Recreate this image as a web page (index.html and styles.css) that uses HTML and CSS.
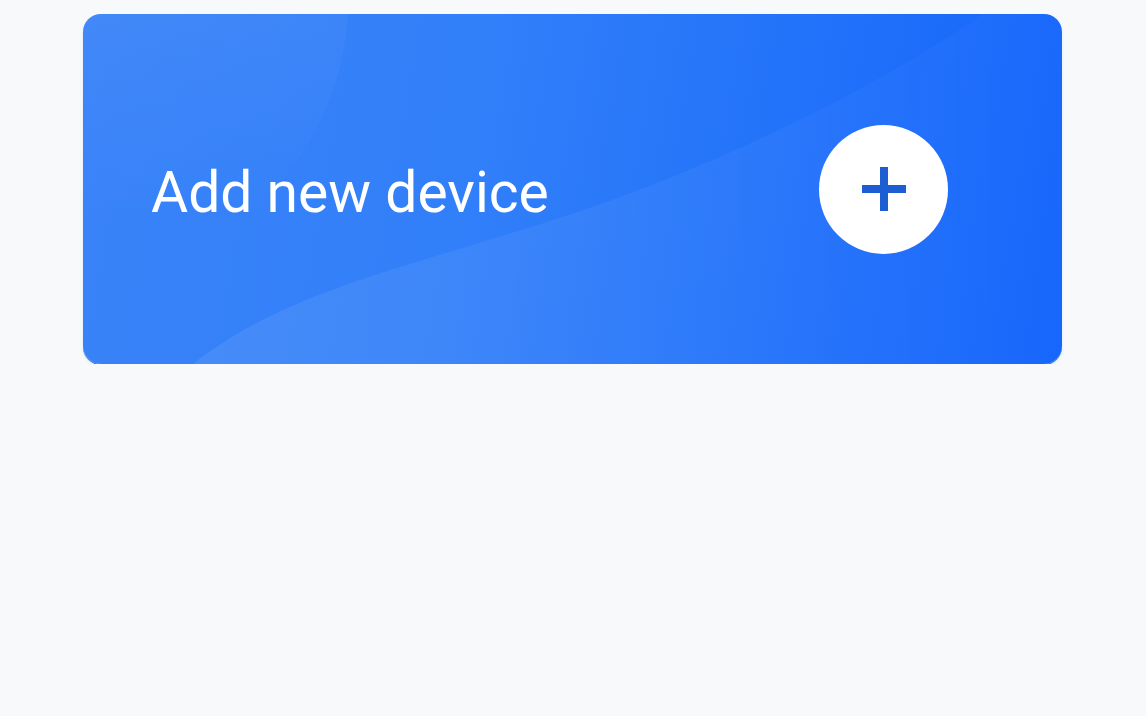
FILE: index.html
```html
<!DOCTYPE html>
<html lang="en">
<head>
<meta charset="utf-8">
<title>Add new device</title>
<link rel="stylesheet" href="styles.css">
</head>
<body>
<main class="page">
  <button class="add-card" type="button">
    <svg class="add-card__deco" viewBox="0 0 979 350" preserveAspectRatio="none" aria-hidden="true">
      <defs>
        <linearGradient id="circleFade" x1="0" y1="0" x2="0" y2="1">
          <stop offset="0" stop-color="#ffffff" stop-opacity="0.09"/>
          <stop offset="0.45" stop-color="#ffffff" stop-opacity="0.05"/>
          <stop offset="0.9" stop-color="#ffffff" stop-opacity="0"/>
        </linearGradient>
        <linearGradient id="waveFade" x1="0" y1="0" x2="1" y2="0">
          <stop offset="0" stop-color="#ffffff" stop-opacity="0.08"/>
          <stop offset="0.5" stop-color="#ffffff" stop-opacity="0.05"/>
          <stop offset="1" stop-color="#ffffff" stop-opacity="0.01"/>
        </linearGradient>
      </defs>
      <circle cx="-13" cy="-14" r="278" fill="url(#circleFade)"/>
      <path d="M110 350 C 200 280, 300 260, 467 207 S 800 70, 900 0 L 979 0 L 979 350 Z" fill="url(#waveFade)"/>
    </svg>
    <span class="add-card__label">Add new device</span>
    <span class="add-card__icon">
      <svg viewBox="0 0 46 46" width="46" height="46" aria-hidden="true">
        <path d="M23 1 V45 M1 23 H45" stroke="#1d5fd3" stroke-width="8" fill="none"/>
      </svg>
    </span>
  </button>
</main>
</body>
</html>
```
FILE: styles.css
```css
* { box-sizing: border-box; }

html, body {
  margin: 0;
  padding: 0;
  background: #f8f9fa;
}

body {
  font-family: Roboto, "Noto Sans", "Liberation Sans", sans-serif;
}

.page {
  padding: 14px 84px 0 83px;
}

.add-card {
  position: relative;
  overflow: hidden;
  width: 100%;
  height: 350px;
  border: none;
  border-radius: 18px;
  padding: 0 114px 0 68px;
  display: flex;
  align-items: center;
  justify-content: space-between;
  background: linear-gradient(100deg, #3a83f8 0%, #317ff9 40%, #2272fa 70%, #1565fb 100%);
  box-shadow: 0 1px 0 #3270dd, 0 2px 3px rgba(120, 200, 240, 0.25);
  cursor: pointer;
  font: inherit;
  text-align: left;
}

.add-card__deco {
  position: absolute;
  left: 0;
  top: 0;
  width: 100%;
  height: 100%;
  pointer-events: none;
}

.add-card__label {
  position: relative;
  color: #ffffff;
  font-size: 57px;
  font-weight: 400;
  letter-spacing: 0;
  margin-top: 6px;
}

.add-card__icon {
  position: relative;
  width: 129px;
  height: 129px;
  border-radius: 50%;
  background: #ffffff;
  display: flex;
  align-items: center;
  justify-content: center;
  flex: none;
}
```
